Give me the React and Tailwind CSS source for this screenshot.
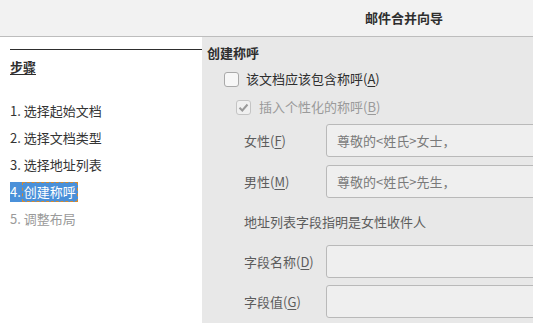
import React from 'react';

const font = { fontFamily: '"Noto Sans CJK SC", "Noto Sans", sans-serif' };

function Mn({ children }) {
  return <span className="underline underline-offset-2">{children}</span>;
}

function Field({ label, value, className = '' }) {
  return (
    <div className={`flex items-center h-[33px] ${className}`}>
      <div className="w-[82px] shrink-0 text-[#5c5c5c]">{label}</div>
      <div className="flex-1 h-full rounded-[3px] border border-[#b9b9b9] bg-[#efefef] flex items-center px-[10px] text-[#7a7a7a]">
        {value}
      </div>
    </div>
  );
}

export default function App() {
  const steps = ['1. 选择起始文档', '2. 选择文档类型', '3. 选择地址列表', '4. 创建称呼', '5. 调整布局'];
  return (
    <div className="w-[533px] h-[323px] overflow-hidden bg-[#e8e8e8] text-[13px] flex flex-col" style={font}>
      {/* title bar */}
      <div className="h-[37px] shrink-0 bg-[#f2f2f2] border-b border-[#bdbdbd] flex items-center">
        <div className="pl-[365px] font-bold text-[#2e2e2e] text-[13px]">邮件合并向导</div>
      </div>

      <div className="flex flex-1 min-h-0">
        {/* steps */}
        <div className="w-[202px] shrink-0 bg-white pl-[10px] pt-[12px]">
          <div className="h-px bg-[#2e2e2e]" />
          <div className="mt-[7px] h-[20px] flex items-center font-bold text-[#2e2e2e] underline underline-offset-2">步骤</div>
          <div className="mt-[24px] flex flex-col gap-[7px]">
            {steps.map((s, i) => (
              <div key={s} className="h-[20px] flex items-center">
                {i === 3 ? (
                  <span className="bg-[#4a90d9] text-white h-[20px] flex items-center">
                    4.<span className="ml-[1px] outline-1 outline-dashed outline-[#d78a2e] -outline-offset-1 px-[2px] h-[20px] flex items-center">创建称呼</span>
                  </span>
                ) : (
                  <span className={i === 4 ? 'text-[#9a9a9a]' : 'text-[#333333]'}>{s}</span>
                )}
              </div>
            ))}
          </div>
        </div>

        {/* right pane */}
        <div className="flex-1 min-w-0 pl-[5px] pt-[6px]">
          <div className="h-[20px] flex items-center font-bold text-[#2e2e2e]">创建称呼</div>
          <div className="mt-[6px] ml-[17px] flex items-center h-[20px]">
            <span className="w-[15px] h-[15px] rounded-[3px] border border-[#a9a9a9] bg-[#f7f7f7]" />
            <span className="ml-[7px] text-[#2e2e2e]">该文档应该包含称呼(<Mn>A</Mn>)</span>
          </div>
          <div className="mt-[8px] ml-[29px] flex items-center h-[20px]">
            <span className="w-[15px] h-[15px] rounded-[3px] border border-[#c4c4c4] bg-[#f0f0f0] flex items-center justify-center">
              <svg width="11" height="11" viewBox="0 0 11 11"><path d="M1.5 5.8 L4.3 8.5 L9.5 2.5" stroke="#9a9a9a" strokeWidth="2" fill="none" /></svg>
            </span>
            <span className="ml-[8px] text-[#9a9a9a]">插入个性化的称呼(<Mn>B</Mn>)</span>
          </div>
          <div className="mt-[7px] ml-[37px] -mr-[10px] flex flex-col">
            <Field label={<>女性(<Mn>F</Mn>)</>} value="尊敬的<姓氏>女士，" />
            <Field className="mt-[8px]" label={<>男性(<Mn>M</Mn>)</>} value="尊敬的<姓氏>先生，" />
            <div className="mt-[14px] h-[20px] flex items-center text-[#5c5c5c]">地址列表字段指明是女性收件人</div>
            <Field className="mt-[13px]" label={<>字段名称(<Mn>D</Mn>)</>} value="" />
            <Field className="mt-[7px]" label={<>字段值(<Mn>G</Mn>)</>} value="" />
          </div>
        </div>
      </div>
    </div>
  );
}
